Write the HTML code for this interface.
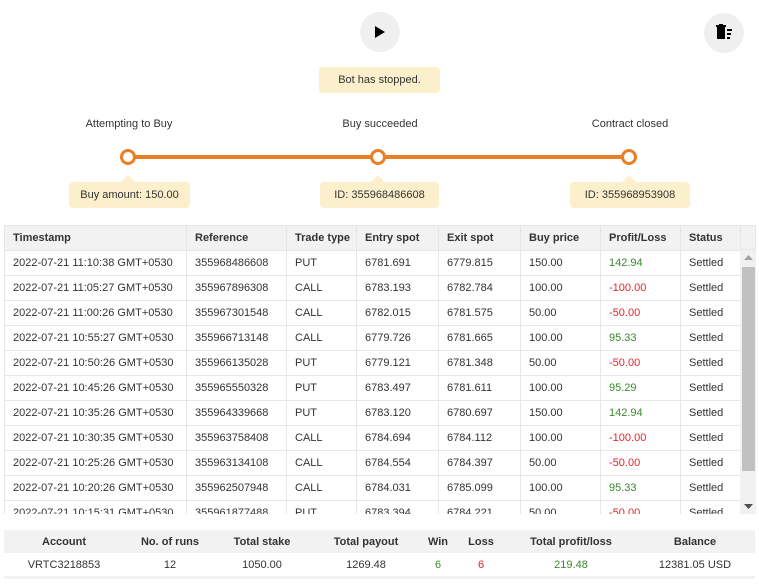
<!DOCTYPE html>
<html><head><meta charset="utf-8"><style>
*{margin:0;padding:0;box-sizing:border-box}
body{width:759px;height:585px;background:#fff;font-family:"Liberation Sans",Arial,sans-serif;font-size:11px;color:#333;position:relative;overflow:hidden}
.abs{position:absolute}
.circ{position:absolute;width:40px;height:40px;border-radius:50%;background:#efefef}
.tip{position:absolute;background:#fcefcc;border-radius:4px;height:26px;line-height:26px;text-align:center;color:#333;font-size:11px}
.lbl{position:absolute;text-align:center;width:160px;font-size:11px;color:#333}
.dot{position:absolute;width:16px;height:16px;border-radius:50%;border:3px solid #e98024;background:#fff}
.arrow{position:absolute;width:0;height:0;border-left:7px solid transparent;border-right:7px solid transparent;border-bottom:7px solid #fcefcc}
table{border-collapse:collapse;table-layout:fixed}
.main td,.main th{height:25px;border:1px solid #e6e6e6;padding-left:8px;text-align:left;white-space:nowrap;overflow:hidden;font-size:11px}
.main th{background:#f2f2f2;font-weight:bold;color:#333}
.g{color:#3a8a2e}.r{color:#e0262b}
.sum{position:absolute;left:4px;top:530px;width:751px}
.sh{height:23px;background:#f2f2f2}
.sr{height:26px;background:#fff;border-bottom:3px solid #f2f2f2}
.c{position:absolute;transform:translateX(-50%);white-space:nowrap}
</style></head><body>
<div class="circ" style="left:360px;top:12px"></div>
<svg class="abs" style="left:374px;top:25px" width="12" height="14"><path d="M1 1 L11 7 L1 13Z" fill="#000"/></svg>
<div class="circ" style="left:704px;top:13px"></div>
<svg class="abs" style="left:714px;top:23px" width="22" height="20"><rect x="3" y="4" width="8" height="12" fill="#000"/><rect x="2" y="2" width="10" height="2" fill="#000"/><rect x="5" y="1" width="4" height="1" fill="#000"/><rect x="13" y="6" width="5" height="2" fill="#000"/><rect x="13" y="10" width="4" height="2" fill="#000"/><rect x="13" y="14" width="3" height="2" fill="#000"/></svg>
<div class="tip" style="left:319px;top:67px;width:121px">Bot has stopped.</div>

<div class="lbl" style="left:49px;top:118px">Attempting to Buy</div>
<div class="lbl" style="left:300px;top:118px">Buy succeeded</div>
<div class="lbl" style="left:550px;top:118px">Contract closed</div>
<div class="abs" style="left:130px;top:155px;width:498px;height:4px;background:#e98024"></div>
<div class="dot" style="left:120px;top:149px"></div>
<div class="dot" style="left:370px;top:149px"></div>
<div class="dot" style="left:621px;top:149px"></div>
<div class="arrow" style="left:121px;top:175px"></div>
<div class="arrow" style="left:371px;top:175px"></div>
<div class="arrow" style="left:622px;top:175px"></div>
<div class="tip" style="left:69px;top:182px;width:121px">Buy amount: 150.00</div>
<div class="tip" style="left:320px;top:182px;width:119px">ID: 355968486608</div>
<div class="tip" style="left:570px;top:182px;width:120px">ID: 355968953908</div>

<div class="abs" style="left:4px;top:225px;width:752px;height:289px;overflow:hidden">
<div class="abs" style="left:0;top:0;width:752px;height:25px;background:#f2f2f2;border:1px solid #e6e6e6"></div>
<table class="main" style="width:736px;position:relative">
<colgroup><col style="width:182px"><col style="width:100px"><col style="width:70px"><col style="width:82px"><col style="width:82px"><col style="width:80px"><col style="width:80px"><col style="width:60px"></colgroup>
<tr><th>Timestamp</th><th>Reference</th><th>Trade type</th><th>Entry spot</th><th>Exit spot</th><th>Buy price</th><th>Profit/Loss</th><th>Status</th></tr>
<tr><td>2022-07-21 11:10:38 GMT+0530</td><td>355968486608</td><td>PUT</td><td>6781.691</td><td>6779.815</td><td>150.00</td><td class="g">142.94</td><td>Settled</td></tr>
<tr><td>2022-07-21 11:05:27 GMT+0530</td><td>355967896308</td><td>CALL</td><td>6783.193</td><td>6782.784</td><td>100.00</td><td class="r">-100.00</td><td>Settled</td></tr>
<tr><td>2022-07-21 11:00:26 GMT+0530</td><td>355967301548</td><td>CALL</td><td>6782.015</td><td>6781.575</td><td>50.00</td><td class="r">-50.00</td><td>Settled</td></tr>
<tr><td>2022-07-21 10:55:27 GMT+0530</td><td>355966713148</td><td>CALL</td><td>6779.726</td><td>6781.665</td><td>100.00</td><td class="g">95.33</td><td>Settled</td></tr>
<tr><td>2022-07-21 10:50:26 GMT+0530</td><td>355966135028</td><td>PUT</td><td>6779.121</td><td>6781.348</td><td>50.00</td><td class="r">-50.00</td><td>Settled</td></tr>
<tr><td>2022-07-21 10:45:26 GMT+0530</td><td>355965550328</td><td>PUT</td><td>6783.497</td><td>6781.611</td><td>100.00</td><td class="g">95.29</td><td>Settled</td></tr>
<tr><td>2022-07-21 10:35:26 GMT+0530</td><td>355964339668</td><td>PUT</td><td>6783.120</td><td>6780.697</td><td>150.00</td><td class="g">142.94</td><td>Settled</td></tr>
<tr><td>2022-07-21 10:30:35 GMT+0530</td><td>355963758408</td><td>CALL</td><td>6784.694</td><td>6784.112</td><td>100.00</td><td class="r">-100.00</td><td>Settled</td></tr>
<tr><td>2022-07-21 10:25:26 GMT+0530</td><td>355963134108</td><td>CALL</td><td>6784.554</td><td>6784.397</td><td>50.00</td><td class="r">-50.00</td><td>Settled</td></tr>
<tr><td>2022-07-21 10:20:26 GMT+0530</td><td>355962507948</td><td>CALL</td><td>6784.031</td><td>6785.099</td><td>100.00</td><td class="g">95.33</td><td>Settled</td></tr>
<tr><td>2022-07-21 10:15:31 GMT+0530</td><td>355961877488</td><td>PUT</td><td>6783.394</td><td>6784.221</td><td>50.00</td><td class="r">-50.00</td><td>Settled</td></tr>
</table>
<div class="abs" style="left:736px;top:25px;width:16px;height:264px;background:#f1f1f1"></div>
<div class="abs" style="left:738px;top:42px;width:13px;height:204px;background:#c1c1c1"></div>
<svg class="abs" style="left:740px;top:30px" width="9" height="6"><path d="M0 5 L4.5 0 L9 5Z" fill="#a3a3a3"/></svg>
<svg class="abs" style="left:740px;top:279px" width="9" height="6"><path d="M0 0 L4.5 5 L9 0Z" fill="#505050"/></svg>
</div>

<div class="sum">
<div class="sh" style="position:relative;font-weight:bold">
<span class="c" style="left:60px;top:6px">Account</span><span class="c" style="left:166px;top:6px">No. of runs</span><span class="c" style="left:258px;top:6px">Total stake</span><span class="c" style="left:362px;top:6px">Total payout</span><span class="c" style="left:434px;top:6px">Win</span><span class="c" style="left:477px;top:6px">Loss</span><span class="c" style="left:567px;top:6px">Total profit/loss</span><span class="c" style="left:691px;top:6px">Balance</span>
</div>
<div class="sr" style="position:relative">
<span class="c" style="left:60px;top:6px">VRTC3218853</span><span class="c" style="left:166px;top:6px">12</span><span class="c" style="left:258px;top:6px">1050.00</span><span class="c" style="left:362px;top:6px">1269.48</span><span class="c g" style="left:434px;top:6px">6</span><span class="c r" style="left:477px;top:6px">6</span><span class="c g" style="left:567px;top:6px">219.48</span><span class="c" style="left:691px;top:6px">12381.05 USD</span>
</div>
</div>
</body></html>
